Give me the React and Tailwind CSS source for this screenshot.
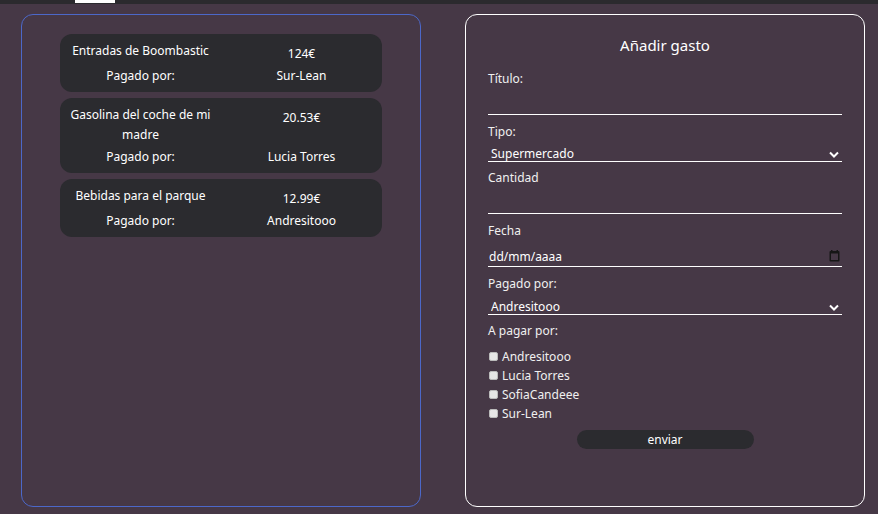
import React from "react";

const gastos = [
  { titulo: "Entradas de Boombastic", cantidad: "124€", pagador: "Sur-Lean" },
  { titulo: "Gasolina del coche de mi madre", cantidad: "20.53€", pagador: "Lucia Torres" },
  { titulo: "Bebidas para el parque", cantidad: "12.99€", pagador: "Andresitooo" },
];

const miembros = ["Andresitooo", "Lucia Torres", "SofiaCandeee", "Sur-Lean"];

const Chevron = () => (
  <svg width="10" height="7" viewBox="0 0 10 7" className="absolute right-[3px] bottom-[4px]">
    <path d="M1 1.5 L5 5.5 L9 1.5" fill="none" stroke="#fff" strokeWidth="2" />
  </svg>
);

const GastoCard = ({ gasto }) => (
  <div className="bg-[#2b2b2f] rounded-[12px] pt-[7px] pb-[6px] grid grid-cols-2 gap-y-[2px] text-center text-[12px] leading-5 text-white">
    <p className="px-[6px]">{gasto.titulo}</p>
    <p className="pt-[3px]">{gasto.cantidad}</p>
    <p>Pagado por:</p>
    <p>{gasto.pagador}</p>
  </div>
);

const Label = ({ children, className = "" }) => (
  <label className={"block h-5 leading-5 text-[12px] text-[#f0f0f0] " + className}>{children}</label>
);

export default function App() {
  return (
    <div className="min-h-[514px] bg-[#463846]" style={{ fontFamily: "'Noto Sans', sans-serif" }}>
      {/* barra superior */}
      <div className="h-[4px] bg-[#2b2a2e] pl-[75px]">
        <div className="w-[40px] h-[3px] bg-white" />
      </div>

      <div className="flex gap-[44px] pl-[21px] pt-[10px]">
        {/* lista de gastos */}
        <div className="w-[400px] h-[493px] border border-[#4c68c9] rounded-[12px] pt-[19px] px-[38px]">
          <div className="flex flex-col gap-[6px]">
            {gastos.map((g) => (
              <GastoCard key={g.titulo} gasto={g} />
            ))}
          </div>
        </div>

        {/* formulario */}
        <form className="w-[400px] h-[493px] border border-white rounded-[12px] pt-[18px] px-[22px] text-white">
          <h2 className="text-center text-[15px] leading-6 mb-[12px]">Añadir gasto</h2>

          <Label>Título:</Label>
          <input type="text" className="block w-full h-[26px] bg-transparent border-0 border-b border-white outline-none text-[12px]" />

          <Label className="mt-[7px]">Tipo:</Label>
          <div className="relative mt-[3px]">
            <select className="block w-full h-[17px] appearance-none bg-transparent border-0 border-b border-white text-[12px] leading-[14px] pt-[2px] pb-0 pl-[3px] outline-none">
              <option className="text-black">Supermercado</option>
            </select>
            <Chevron />
          </div>

          <Label className="mt-[6px]">Cantidad</Label>
          <input type="text" className="block w-full h-[26px] bg-transparent border-0 border-b border-white outline-none text-[12px]" />

          <Label className="mt-[7px]">Fecha</Label>
          <div className="relative mt-[4px] h-[22px] border-b border-white flex items-center">
            <span className="text-[12px] pl-[1px] pt-[2px]">dd/mm/aaaa</span>
            <svg width="11" height="12" viewBox="0 0 11 12" className="absolute right-[2px] top-[5px]">
              <rect x="0.5" y="1" width="10" height="10.5" rx="1" fill="#161616" />
              <rect x="2" y="3.5" width="7" height="6.5" fill="#463846" />
              <rect x="2" y="0" width="1.5" height="2" fill="#161616" />
              <rect x="7.5" y="0" width="1.5" height="2" fill="#161616" />
            </svg>
          </div>

          <Label className="mt-[7px]">Pagado por:</Label>
          <div className="relative mt-[3px]">
            <select className="block w-full h-[18px] appearance-none bg-transparent border-0 border-b border-white text-[12px] leading-[14px] pt-[3px] pb-0 pl-[3px] outline-none">
              <option className="text-black">Andresitooo</option>
            </select>
            <Chevron />
          </div>

          <Label className="mt-[6px]">A pagar por:</Label>
          <div className="mt-[6px] flex flex-col">
            {miembros.map((m) => (
              <label key={m} className="flex items-center h-[19px] text-[12px] text-[#f0f0f0]">
                <span className="w-[9px] h-[9px] bg-[#e6e6e6] border border-[#bbbbbb] rounded-[2px] ml-[1px] mr-[4px]" />
                {m}
              </label>
            ))}
          </div>

          <div className="flex justify-center mt-[7px]">
            <button type="button" className="w-[177px] h-[19px] rounded-full bg-[#2b2b2f] text-[12px] leading-[19px] text-white">
              enviar
            </button>
          </div>
        </form>
      </div>
    </div>
  );
}
